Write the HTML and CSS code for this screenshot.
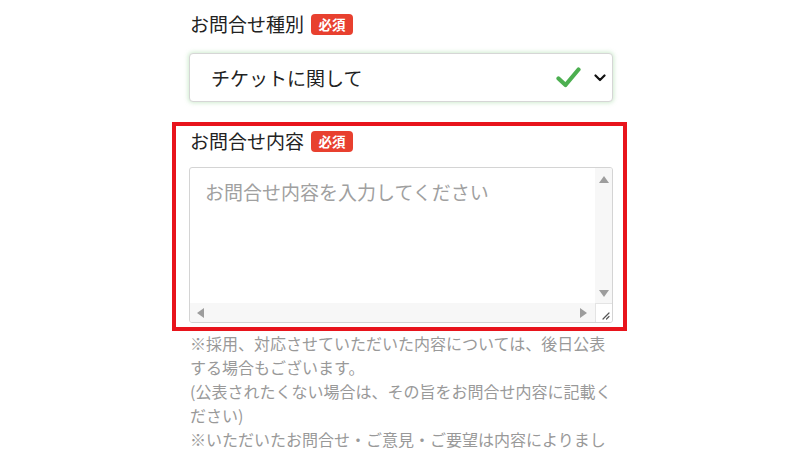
FILE: index.html
```html
<!DOCTYPE html>
<html lang="ja">
<head>
<meta charset="utf-8">
<title>お問合せ</title>
<link rel="stylesheet" href="styles.css">
</head>
<body>
<form class="contact-form">
  <div class="field">
    <label class="field-label">お問合せ種別<span class="required">必須</span></label>
    <div class="select-box">
      <span class="select-value">チケットに関して</span>
      <svg class="valid-icon" width="25" height="21" viewBox="0 0 25 21"><path d="M2.5 11.5 L9.5 18 L22.5 2.5" fill="none" stroke="#4caf50" stroke-width="4.2" stroke-linecap="round" stroke-linejoin="round"/></svg>
      <svg class="chevron" width="12" height="8" viewBox="0 0 12 8"><path d="M1.5 1.5 L6 6 L10.5 1.5" fill="none" stroke="#111" stroke-width="2.2" stroke-linecap="round" stroke-linejoin="round"/></svg>
    </div>
  </div>

  <div class="field highlight">
    <label class="field-label">お問合せ内容<span class="required">必須</span></label>
    <div class="message-box">
      <textarea class="message" placeholder="お問合せ内容を入力してください"></textarea>
      <div class="scroll-v">
        <span class="arrow arrow-up"></span>
        <span class="arrow arrow-down"></span>
      </div>
      <div class="scroll-h">
        <span class="arrow arrow-left"></span>
        <span class="arrow arrow-right"></span>
      </div>
      <div class="scroll-corner">
        <svg width="8" height="8" viewBox="0 0 8 8"><path d="M1 7 L7 1 M4.5 7 L7 4.5" stroke="#555" stroke-width="1.2" stroke-linecap="round"/></svg>
      </div>
    </div>
  </div>

  <p class="notes">※採用、対応させていただいた内容については、後日公表する場合もございます。<br>(公表されたくない場合は、その旨をお問合せ内容に記載ください)<br>※いただいたお問合せ・ご意見・ご要望は内容によりましては、お返事できない場合もございます。</p>
</form>
</body>
</html>
```
FILE: styles.css
```css
html, body {
  margin: 0;
  background: #ffffff;
}

body {
  font-family: "Noto Sans CJK JP", "Noto Sans", sans-serif;
  color: #222;
  height: 450px;
  overflow: hidden;
}

.contact-form {
  width: 424px;
  margin-left: 189px;
  padding-top: 10px;
}

.field-label {
  display: flex;
  align-items: center;
  height: 28px;
  font-size: 19px;
  line-height: 28px;
  color: #222;
  padding-left: 1px;
}

.required {
  display: inline-block;
  margin-left: 7px;
  width: 42px;
  height: 21px;
  line-height: 21px;
  border-radius: 4px;
  background: #e8402f;
  color: #fff;
  font-size: 13.5px;
  font-weight: 700;
  text-align: center;
}

.select-box {
  display: flex;
  align-items: center;
  box-sizing: border-box;
  height: 49px;
  margin-top: 15px;
  padding: 0 6px 0 21px;
  border: 1px solid #d6d6d6;
  border-radius: 4px;
  box-shadow: 0 0 4px 1px rgba(120, 200, 120, 0.35);
  background: #fff;
}

.select-value {
  flex: 1;
  font-size: 19px;
  color: #222;
}

.valid-icon {
  margin-right: 13px;
}

.highlight {
  margin: 20px -14px 0 -17px;
  padding: 1px 10px 4px 13px;
  border: 4px solid #e8141c;
}

/* textarea with classic scrollbars on both axes */
.message-box {
  display: grid;
  grid-template-columns: 1fr 17px;
  grid-template-rows: 1fr 19px;
  box-sizing: border-box;
  width: 424px;
  height: 156px;
  margin-top: 12px;
  border: 1px solid #d4d4d4;
  border-radius: 3px;
  overflow: hidden;
  background: #fff;
}

.message {
  display: block;
  box-sizing: border-box;
  width: 100%;
  height: 100%;
  margin: 0;
  padding: 11px 15px;
  border: 0;
  outline: none;
  resize: none;
  overflow: hidden;
  font-family: inherit;
  font-size: 19px;
  line-height: 26px;
  color: #222;
  background: transparent;
}

.message::placeholder {
  color: #a0a0a0;
}

.scroll-v {
  display: flex;
  flex-direction: column;
  justify-content: space-between;
  align-items: center;
  padding: 8px 0 6px;
  background: #f7f7f7;
}

.scroll-h {
  display: flex;
  justify-content: space-between;
  align-items: center;
  padding: 0 8px 0 7px;
  background: #f7f7f7;
}

.scroll-corner {
  display: flex;
  align-items: flex-end;
  justify-content: flex-end;
  padding: 0 2px 2px 0;
  background: #fff;
  border-top: 1px solid #e4e4e4;
  border-left: 1px solid #e4e4e4;
}

.arrow {
  width: 0;
  height: 0;
  border-style: solid;
  border-color: transparent;
}

.arrow-up {
  border-width: 0 5px 7px;
  border-bottom-color: #9d9d9d;
}

.arrow-down {
  border-width: 7px 5px 0;
  border-top-color: #9d9d9d;
}

.arrow-left {
  border-width: 5px 7px 5px 0;
  border-right-color: #9d9d9d;
}

.arrow-right {
  border-width: 5px 0 5px 7px;
  border-left-color: #9d9d9d;
}

.notes {
  margin: 0;
  padding-left: 1px;
  font-size: 16px;
  line-height: 24px;
  color: #999;
}
```
